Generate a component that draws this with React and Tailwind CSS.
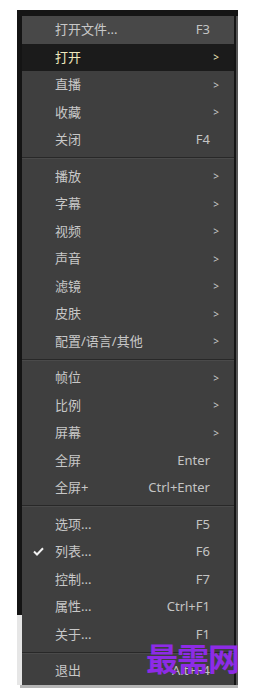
import React from "react";

const groups = [
  [
    { label: "打开文件...", key: "F3", hover: true },
    { label: "打开", sub: true, active: true },
    { label: "直播", sub: true },
    { label: "收藏", sub: true },
    { label: "关闭", key: "F4" },
  ],
  [
    { label: "播放", sub: true },
    { label: "字幕", sub: true },
    { label: "视频", sub: true },
    { label: "声音", sub: true },
    { label: "滤镜", sub: true },
    { label: "皮肤", sub: true },
    { label: "配置/语言/其他", sub: true },
  ],
  [
    { label: "帧位", sub: true },
    { label: "比例", sub: true },
    { label: "屏幕", sub: true },
    { label: "全屏", key: "Enter" },
    { label: "全屏+", key: "Ctrl+Enter" },
  ],
  [
    { label: "选项...", key: "F5" },
    { label: "列表...", key: "F6", checked: true },
    { label: "控制...", key: "F7" },
    { label: "属性...", key: "Ctrl+F1" },
    { label: "关于...", key: "F1" },
  ],
  [{ label: "退出", key: "Alt+F4" }],
];

const MenuRow = ({ item }) => {
  const bg = item.active ? "bg-[#1b1b1b]" : item.hover ? "bg-[#484848]" : "";
  const color = item.active ? "text-[#efe7bd]" : "text-[#c8c8c8]";
  return (
    <div className={`relative flex items-center h-[27.5px] pl-[33px] ${bg} ${color}`}>
      {item.checked && (
        <svg className="absolute left-[11px] top-[9px]" width="11" height="9" viewBox="0 0 11 9">
          <path d="M1 4.5 L4 7.5 L10 1.2" fill="none" stroke="#f2f2f2" strokeWidth="2" />
        </svg>
      )}
      <span className="flex-1 text-[13px] leading-none">{item.label}</span>
      {item.key && <span className="pr-[24px] text-[13px] leading-none text-[#c4c4c4]">{item.key}</span>}
      {item.sub && <span className="pr-[15px] text-[10px] leading-none">&gt;</span>}
    </div>
  );
};

const Separator = () => (
  <div className="h-[9px] flex flex-col justify-center">
    <div className="h-px bg-[#282828]" />
    <div className="h-px bg-[#4a4a4a]" />
  </div>
);

const App = () => {
  return (
    <div
      className="relative w-[257px] h-[692px] bg-white overflow-hidden"
      style={{ fontFamily: '"Noto Sans", "Noto Sans CJK SC", sans-serif' }}
    >
      <div className="ml-[17px] mt-[10px] w-[221px] flex flex-col">
        <div className="h-[6px] bg-[#151515]" />
        <div className="flex">
          <div className="w-[5px] flex flex-col">
            <div className="h-[599px] bg-[#141414]" />
            <div className="flex-1 bg-[#e6e6e6]" />
          </div>
          <div className="w-[212px] bg-[#3f3f3f]">
            {groups.map((g, gi) => (
              <div key={gi}>
                {gi > 0 && <Separator />}
                {g.map((item, i) => (
                  <MenuRow key={i} item={item} />
                ))}
              </div>
            ))}
          </div>
          <div className="w-[2px] bg-[#151515]" />
          <div className="w-[2px] bg-[#555555]" />
        </div>
        <div className="ml-[3px] h-[3px] bg-[#b5b5b5]" />
      </div>
      <div
        className="absolute left-[146px] top-[641px] text-[32px] font-bold leading-none text-[#8d2be6] tracking-[-1px]"
        style={{ fontFamily: '"Noto Sans CJK SC", serif' }}
      >
        最需网
      </div>
    </div>
  );
};

export default App;
